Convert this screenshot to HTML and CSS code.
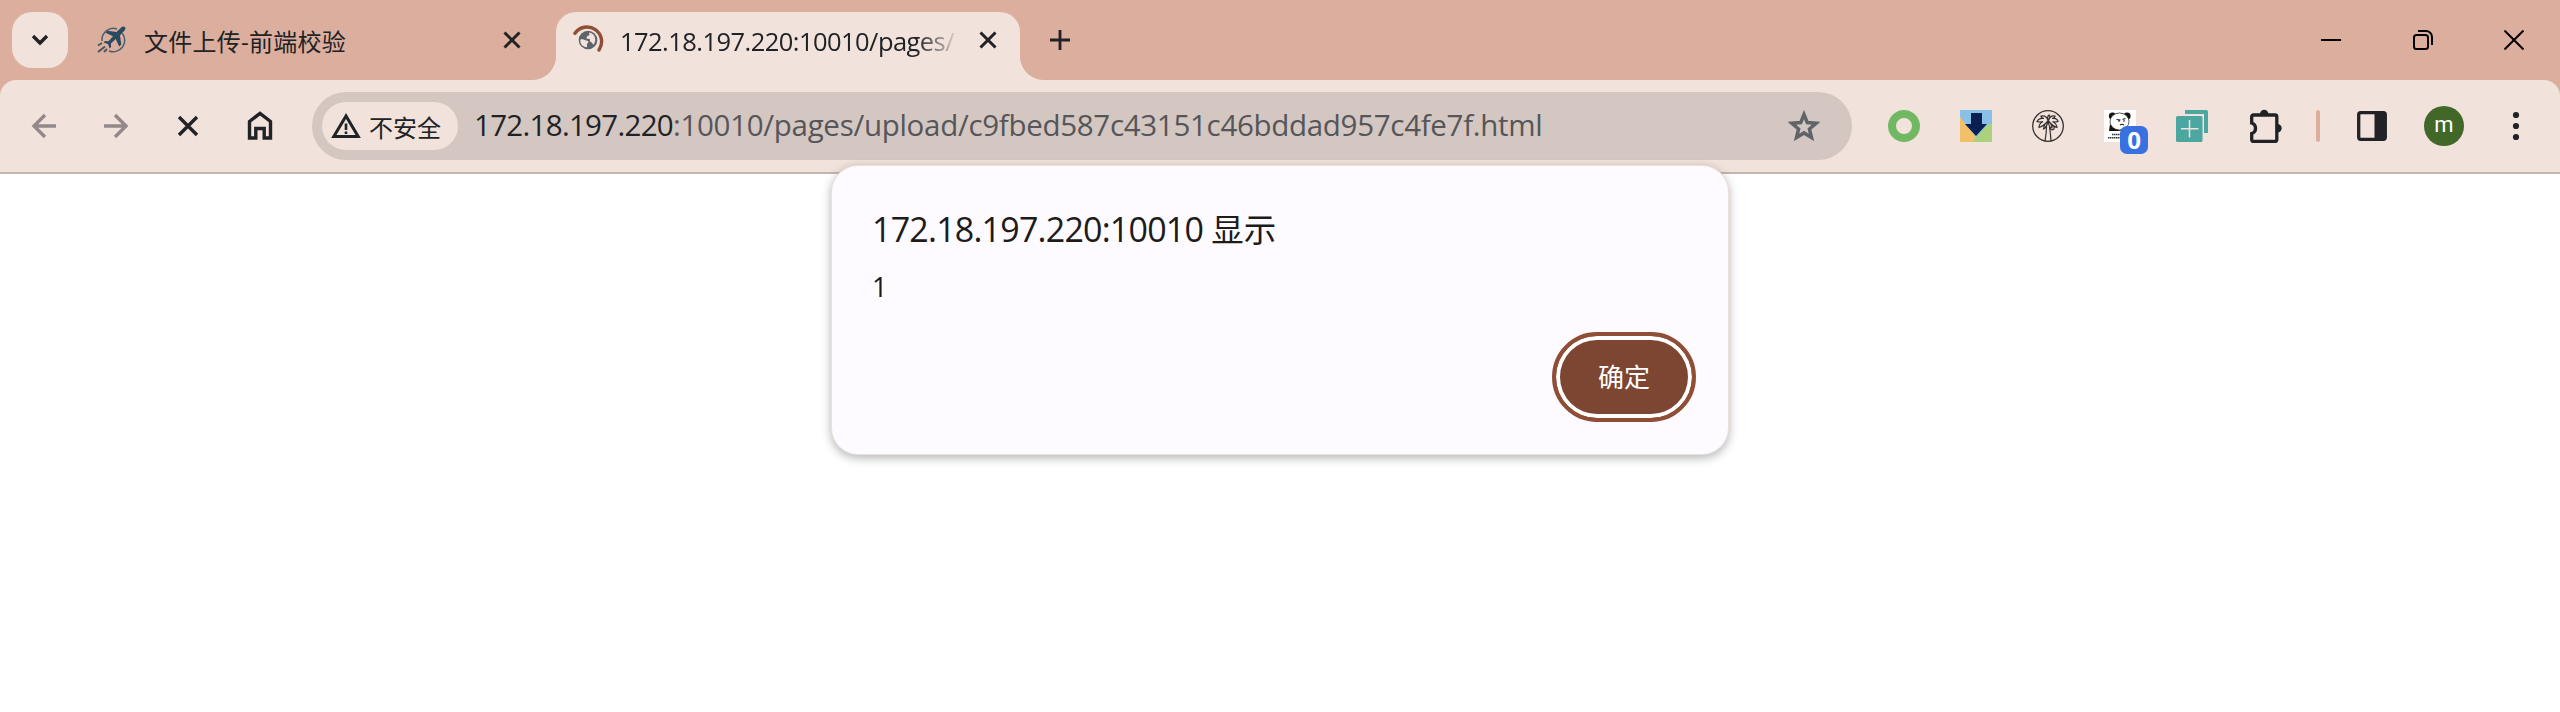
FILE: index.html
```html
<!DOCTYPE html>
<html lang="zh-CN">
<head>
<meta charset="utf-8">
<title>文件上传-前端校验</title>
<link rel="stylesheet" href="styles.css">
</head>
<body>
<div class="browser">
  <header class="tabstrip">
    <button class="tab-search" aria-label="搜索标签页"><svg width="20" height="14" viewBox="0 0 20 14"><path d="M3 3l7 7 7-7" fill="none" stroke="#202226" stroke-width="3.4"/></svg></button>
    <div class="tab">
      <svg class="favicon" width="32" height="32" viewBox="0 0 32 32">
        <path d="M6 17A11.500 11.500 0 0 1 21 5M26.500 9.500A11.500 11.500 0 0 1 13 27" fill="none" stroke="#47606f" stroke-width="1.500"/>
        <path d="M29 3q-2-1.200-4 .700l-4.500 4.300-9-1.200-2 2 7.500 3.500-4.500 5-3.500-.4-1.500 1.500 4.500 1.600 1.600 4.500 1.500-1.600-.2-3.500 4.800-4.500 3.500 7.500 2.100-2-1.300-9 4.500-4.800q1.800-2 .500-3.600z" fill="#2b4a60"/>
        <path d="M2 21.500l4-2.500M2 28l7-5.500M8 28l3-3" stroke="#4a5660" stroke-width="2"/>
      </svg>
      <span class="tab-title tab-title-cjk">文件上传-前端校验</span>
      <svg class="tab-close" width="20" height="20" viewBox="0 0 20 20"><path d="M2.500 2.500l15 15M17.500 2.500l-15 15" stroke="#202226" stroke-width="3"/></svg>
    </div>
    <div class="tab tab-active">
      <svg class="spinner" width="32" height="32" viewBox="0 0 32 32">
        <path d="M3 9.300A14.300 14.300 0 0 1 27 26" fill="none" stroke="#8f4e35" stroke-width="3.400" stroke-linecap="round"/>
        <circle cx="16" cy="16" r="9.300" fill="#5f6469"/>
        <path d="M9 15q3 0 5 1.500 2-.5 2.500 1.500l-1.500 2v3.300q-6-.3-6.800-6.300zM17 8.600q6 1 6.300 7.400-.3 3-2 4.800l-1.800-2.600q-2-.2-1.500-3l-3.500-.7q0-3 3-3.200z" fill="#f1e2db"/>
      </svg>
      <span class="tab-title tab-title-url">172.18.197.220:10010/pages/</span>
      <svg class="tab-close" width="20" height="20" viewBox="0 0 20 20"><path d="M2.500 2.500l15 15M17.500 2.500l-15 15" stroke="#202226" stroke-width="3"/></svg>
    </div>
    <svg class="new-tab" width="20" height="20" viewBox="0 0 20 20"><path d="M10 0v20M0 10h20" stroke="#202226" stroke-width="2.800"/></svg>
    <div class="window-controls">
      <svg width="20" height="20" viewBox="0 0 20 20"><path d="M0 10h20" stroke="#000" stroke-width="2"/></svg>
      <svg width="20" height="20" viewBox="0 0 20 20" fill="none" stroke="#000" stroke-width="2"><rect x="1" y="5" width="14" height="14" rx="2.500"/><path d="M5 1h8a6 6 0 0 1 6 6v8"/></svg>
      <svg width="20" height="20" viewBox="0 0 20 20"><path d="M.5.5l19 19M19.500.5l-19 19" stroke="#000" stroke-width="2"/></svg>
    </div>
  </header>

  <div class="toolbar-back">
  <nav class="toolbar">
    <div class="nav-buttons">
      <svg width="32" height="32" viewBox="0 0 32 32" fill="none" stroke="#94898a" stroke-width="3.400"><path d="M28 16H6M17 5L6 16l11 11"/></svg>
      <svg width="32" height="32" viewBox="0 0 32 32" fill="none" stroke="#94898a" stroke-width="3.400"><path d="M4 16h22M15 5l11 11-11 11"/></svg>
      <svg width="32" height="32" viewBox="0 0 32 32" stroke="#202226" stroke-width="3.400"><path d="M7 7l18 18M25 7L7 25"/></svg>
      <svg width="32" height="32" viewBox="0 0 32 32" fill="none" stroke="#202226" stroke-width="3.400"><path d="M5.500 28V11.500L16 3.300l10.500 8.200V28h-6.300V18.500h-8.400V28z"/></svg>
    </div>
    <div class="omnibox">
      <div class="chip">
        <svg width="30" height="26" viewBox="0 0 30 26"><path d="M15 3L2.800 23.500h24.400z" fill="none" stroke="#202226" stroke-width="3"/><path d="M15 10.500v6.500M15 18.500v2.500" stroke="#202226" stroke-width="2.600"/></svg>
        <span class="chip-text">不安全</span>
      </div>
      <div class="url"><span class="host">172.18.197.220</span><span class="path">:10010/pages/upload/c9fbed587c43151c46bddad957c4fe7f.html</span></div>
      <svg class="star" width="32" height="32" viewBox="0 0 32 32"><path d="M16 4.500l3.300 8.100 8.700.700-6.600 5.700 2.100 8.500-7.500-4.600-7.500 4.600 2.100-8.500L4 13.300l8.700-.7z" fill="none" stroke="#5f6469" stroke-width="3.500"/></svg>
    </div>
    <div class="extensions">
      <svg width="32" height="32" viewBox="0 0 32 32"><circle cx="16" cy="16" r="12" fill="none" stroke="#71b862" stroke-width="8"/></svg>
      <svg width="32" height="32" viewBox="0 0 32 32"><path fill="#88c0e8" d="M0 0h32v32H0z"/><path d="M0 7l16 20-3 5H0z" fill="#f2c069"/><path d="M12 32l16-18h4v18z" fill="#aad17c"/><path d="M11 3h11v11h5L16 26 5 14h6z" fill="#0a1f54"/></svg>
      <svg width="32" height="32" viewBox="0 0 32 32" fill="none" stroke="#35302f"><circle cx="16" cy="16" r="15.300" stroke-width="1.300"/><g stroke-width="1.200"><path d="M13 31q1.500-8 1.500-15M19 31q-.5-8-1.500-14"/><path d="M16 11q-1-6-7-5 0 2 3 2.500-5-1-7 3 3 1 6 0-4 2-4 6 4-1 9-6.500M16 11q2-6 7-5 0 2-3 2.500 5-1 6 3-3 1-5.500 0 4 2 4.500 6-4-1-8.500-6.500M16 11q-4 3-4.500 8 3-1 4.500-8 4 3 4 7-3 0-4-7M16 11q-1-5 1-6 2 2-1 6M19 16q4-1 3 3-3 2-4-1"/></g></svg>
      <div class="panda">
        <svg width="32" height="32" viewBox="0 0 32 32"><path fill="#fff" d="M0 0h32v32H0z"/><circle cx="8.500" cy="6" r="3.600" fill="#111"/><circle cx="23" cy="6" r="3.600" fill="#111"/><path d="M6 14l-1 7h8l8-1z" fill="#111"/><ellipse cx="15.500" cy="11.500" rx="9.500" ry="8.500" fill="#fff" stroke="#333" stroke-width=".8"/><path d="M12.500 9.500l4 .5M18.500 9.500l3-1M14 11h2M19 11h2M16 15q2-1.500 4 0" stroke="#222" stroke-width="1.200" fill="none"/><path d="M8 24.500h9M4 27.800h14" stroke="#333" stroke-width="1.600" stroke-dasharray="1.500 .5"/></svg>
        <span class="badge">0</span>
      </div>
      <svg width="32" height="32" viewBox="0 0 32 32"><path d="M9 0h21.500a1.500 1.500 0 0 1 1.500 1.500V23h-4V4H9z" fill="#4ba79f"/><rect y="6" width="26.500" height="26" rx="1.500" fill="#4ba79f"/><path d="M13.500 10v17.500M5 18.700h17.500" stroke="#f1e2db" stroke-width="1.500"/></svg>
      <svg width="34" height="34" viewBox="0 0 34 34"><path d="M5.500 6h21.500a1.800 1.800 0 0 1 1.800 1.800v22.900a1.800 1.800 0 0 1-1.800 1.800H5.500a1.800 1.800 0 0 1-1.800-1.800V24.500a5.500 5.500 0 0 0 0-10.500V7.800A1.800 1.800 0 0 1 5.500 6z" fill="none" stroke="#202226" stroke-width="3.300"/><path d="M12 5a4.200 4.200 0 0 1 8.400 0zM29.500 15a4.200 4.200 0 0 1 0 8.400z" fill="#202226"/></svg>
    </div>
    <span class="divider"></span>
    <svg class="side-panel" width="30" height="30" viewBox="0 0 30 30"><rect x="1.700" y="1.700" width="26.600" height="26.600" rx="2" fill="none" stroke="#202226" stroke-width="3.300"/><path d="M17.500 1.500h10.500v27H17.500z" fill="#202226"/></svg>
    <span class="avatar">m</span>
    <svg class="menu" width="8" height="32" viewBox="0 0 8 32" fill="#202226"><circle cx="4" cy="5" r="3.100"/><circle cx="4" cy="16" r="3.100"/><circle cx="4" cy="27" r="3.100"/></svg>
  </nav>
  </div>

  <main class="page"></main>

  <section class="dialog" role="alertdialog">
    <h1 class="dialog-title">172.18.197.220:10010 <span class="cjk">显示</span></h1>
    <p class="dialog-message">1</p>
    <div class="dialog-actions"><button class="ok">确定</button></div>
  </section>
</div>
</body>
</html>
```

FILE: styles.css
```css
* { box-sizing: border-box; }
body {
  margin: 0;
  background: #fff;
  color: #202226;
  font-family: "Open Sans", "Noto Sans CJK SC", sans-serif;
}
svg { display: block; flex: none; }
button { border: 0; padding: 0; font: inherit; }
.browser { position: relative; width: 2560px; height: 712px; overflow: hidden; }

.tabstrip { display: flex; height: 80px; background: #dcae9d; }
.tab-search {
  display: flex; align-items: center; justify-content: center;
  width: 56px; height: 56px; margin: 12px 0 0 12px;
  border-radius: 20px; background: #f1e2db;
}
.tab { display: flex; align-items: center; height: 80px; width: 488px; padding: 0 34px 0 28px; }
.tab-title { flex: 1; white-space: nowrap; line-height: 40px; }
.tab-title-cjk { margin-left: 16px; font-size: 24px; letter-spacing: .25px; padding-top: 3px; }
.tab-active {
  position: relative; width: 464px; height: 68px; margin-top: 12px;
  padding: 0 22px 12px 16px;
  background: #f1e2db; border-radius: 20px 20px 0 0;
}
.tab-active::before, .tab-active::after {
  content: ""; position: absolute; bottom: 0; width: 24px; height: 24px;
}
.tab-active::before { left: -24px; background: radial-gradient(circle at 0 0, transparent 23.5px, #f1e2db 24.5px); }
.tab-active::after { right: -24px; background: radial-gradient(circle at 100% 0, transparent 23.5px, #f1e2db 24.5px); }
.tab-title-url {
  flex: none; width: 338px; margin-left: 16px; margin-right: 20px; padding-top: 2px;
  font-size: 25.500px; letter-spacing: -.55px;
  -webkit-mask-image: linear-gradient(90deg, #000 296px, transparent 340px);
  mask-image: linear-gradient(90deg, #000 296px, transparent 340px);
}
.new-tab { margin: 30px 0 0 30px; }
.window-controls { display: flex; gap: 71.500px; margin: 30px 36px 0 auto; }

.toolbar-back { background: #dcae9d; }
.toolbar {
  display: flex; align-items: center; height: 94px; padding: 0 39px 0 28px;
  background: #f1e2db; border-bottom: 2px solid #c3b6b1; border-radius: 16px 16px 0 0;
}
.nav-buttons { display: flex; gap: 40px; margin-right: 36px; }
.omnibox {
  display: flex; align-items: center; width: 1540px; height: 68px; padding: 0 32px 0 10px;
  border-radius: 34px; background: #d4c6c0;
}
.chip {
  display: flex; align-items: center; width: 136px; height: 48px; padding-left: 9px;
  border-radius: 24px; background: #f1e2db;
}
.chip-text { margin-left: 8px; font-size: 24px; line-height: 40px; padding-top: 3px; }
.url { flex: 1; margin-left: 16px; padding-bottom: 2px; font-size: 29.500px; line-height: 44px; white-space: nowrap; }
.host { letter-spacing: -.7px; }
.path { color: #55565a; letter-spacing: -.3px; }
.extensions { display: flex; align-items: center; gap: 40px; margin-left: 36px; }
.panda { position: relative; }
.badge {
  position: absolute; left: 16px; top: 16px; width: 28px; height: 28px;
  border-radius: 7px; background: #3a71e0; color: #fff;
  font-size: 24px; font-weight: 700; line-height: 28px; text-align: center;
}
.divider { width: 4px; height: 32px; margin-left: 34px; border-radius: 2px; background: #dcae9d; }
.side-panel { margin-left: 37px; }
.avatar {
  width: 40px; height: 40px; margin-left: 37px; border-radius: 50%;
  background: #416828; color: #fff; font: 22px/38px Roboto, sans-serif; text-align: center;
}
.menu { margin-left: 48px; }

.dialog {
  position: absolute; left: 832px; top: 166px; width: 896px; height: 288px;
  padding: 38px 32px 32px 40px; border-radius: 26px; background: #fdfbff;
  box-shadow: 0 0 0 1px #efdfd9, 0 3px 8px 2px rgba(40, 50, 45, .3);
  color: #201a18;
}
.dialog-title { margin: 0; font-size: 34px; font-weight: 400; line-height: 50px; letter-spacing: -.78px; }
.dialog-title .cjk { font-size: 32.500px; letter-spacing: 0; }
.dialog-message { margin: 12px 0 0; font-size: 27px; line-height: 40px; }
.dialog-actions { display: flex; justify-content: flex-end; }
.ok {
  width: 144px; height: 90px; margin-top: 25px;
  border: 4px solid #8f4e35; border-radius: 45px;
  background: #7d4632; box-shadow: inset 0 0 0 4px #fff;
  color: #fff; font-size: 26px; line-height: 40px;
}
```
